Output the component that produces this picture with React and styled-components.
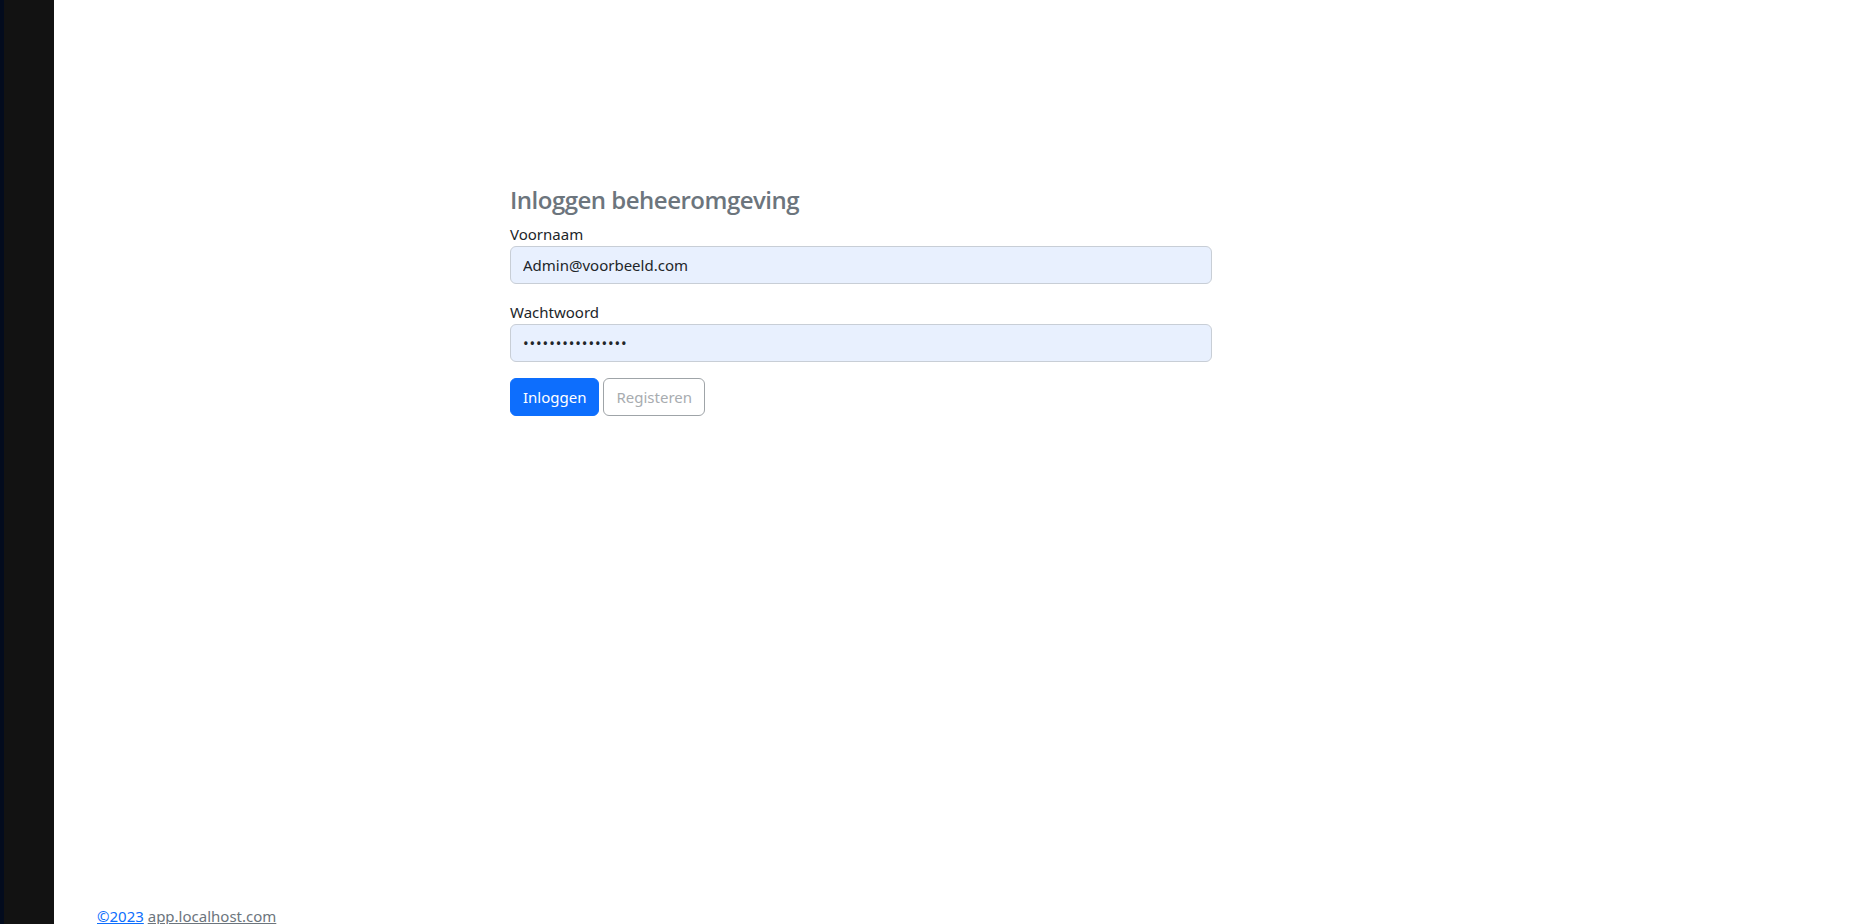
import React from 'react'
import styled, { createGlobalStyle } from 'styled-components'

const GlobalStyle = createGlobalStyle`
  html, body {
    margin: 0;
    padding: 0;
    height: 100%;
    overflow: hidden;
    background: #fff;
  }
  body {
    font-family: "Segoe UI", "Noto Sans", "Open Sans", sans-serif;
    font-size: 15px;
    line-height: 1.5;
    color: #212529;
  }
  * { box-sizing: border-box; }
`

const Layout = styled.div`
  display: flex;
  height: 100vh;
`

const Sidebar = styled.aside`
  width: 54px;
  flex-shrink: 0;
  background: #121212;
  border-left: 4px solid #030b1d;
`

const Main = styled.main`
  flex: 1;
  display: flex;
  flex-direction: column;
  overflow: hidden;
`

const Content = styled.div`
  flex: 1;
  padding: 183px 0 0 456px;
`

const Form = styled.form`
  width: 702px;
  display: flex;
  flex-direction: column;
`

const Title = styled.h3`
  margin: 0 0 5px;
  font-family: "Open Sans", "Noto Sans", sans-serif;
  font-size: 24px;
  font-weight: 600;
  letter-spacing: -0.5px;
  line-height: 34px;
  color: #6c757d;
`

const Field = styled.div`
  display: flex;
  flex-direction: column;
  margin-bottom: 16px;
`

const Label = styled.label`
  font-size: 15px;
  line-height: 24px;
  color: #212529;
`

const Input = styled.input`
  height: 38px;
  padding: 6px 12px;
  font-family: inherit;
  font-size: 15px;
  line-height: 24px;
  letter-spacing: ${({ spaced }) => (spaced ? '0.9px' : 'normal')};
  color: #212529;
  background: #e8f0fe;
  border: 1px solid #c8ced6;
  border-radius: 6px;
  outline: none;
`

const Actions = styled.div`
  display: flex;
  gap: 4px;
`

const Button = styled.button`
  height: 38px;
  padding: 6px 12px;
  font-family: inherit;
  font-size: 15px;
  line-height: 24px;
  border-radius: 6px;
  cursor: pointer;
  border: 1px solid ${({ primary }) => (primary ? '#0d6efd' : '#9fa4a8')};
  background: ${({ primary }) => (primary ? '#0d6efd' : '#fff')};
  color: ${({ primary }) => (primary ? '#fff' : '#a8acb0')};
`

const Footer = styled.footer`
  padding-left: 43px;
  margin-bottom: -4px;
  font-size: 15px;
  line-height: 24px;
`

const Link = styled.a`
  color: ${({ muted }) => (muted ? '#6c757d' : '#0d6efd')};
  text-decoration: underline;
`

const App = () => {
  return (
    <>
      <GlobalStyle />
      <Layout>
        <Sidebar />
        <Main>
          <Content>
            <Form onSubmit={(e) => e.preventDefault()}>
              <Title>Inloggen beheeromgeving</Title>
              <Field>
                <Label htmlFor='email'>Voornaam</Label>
                <Input id='email' type='text' defaultValue='Admin@voorbeeld.com' />
              </Field>
              <Field>
                <Label htmlFor='password'>Wachtwoord</Label>
                <Input id='password' type='password' spaced defaultValue='wachtwoord123456' />
              </Field>
              <Actions>
                <Button primary type='submit'>Inloggen</Button>
                <Button type='button'>Registeren</Button>
              </Actions>
            </Form>
          </Content>
          <Footer>
            <Link href='#'>©2023</Link> <Link muted href='#'>app.localhost.com</Link>
          </Footer>
        </Main>
      </Layout>
    </>
  )
}

export default App
